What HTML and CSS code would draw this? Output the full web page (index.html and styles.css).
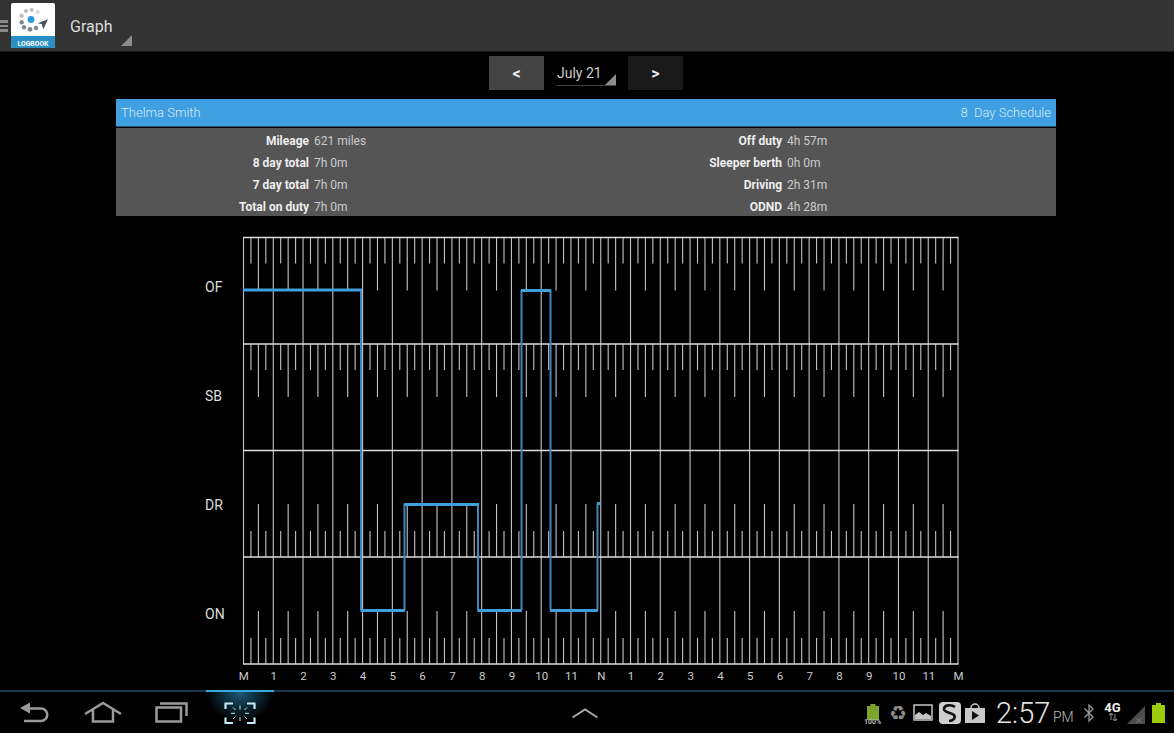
FILE: index.html
```html
<!DOCTYPE html>
<html lang="en">
<head>
<meta charset="utf-8">
<title>Graph</title>
<link rel="stylesheet" href="styles.css">
</head>
<body>
<div class="screen">
  <header class="actionbar">
    <div class="hamburger"><i></i><i></i><i></i></div>
    <svg class="logo" viewBox="0 0 44 45" width="44" height="45" aria-label="Logbook logo">
      <rect width="44" height="45" rx="2" fill="#fff"/>
      <path d="M0 33H44V43a2 2 0 0 1-2 2H2a2 2 0 0 1-2-2Z" fill="#2a8fc4"/>
      <text class="logo-text" x="22" y="43">LOGBOOK</text>
      <circle cx="20" cy="16.5" r="3.4" fill="#2b9be0"/>
      <g fill="#b9bec2">
        <circle cx="20.7" cy="7" r="2"/><circle cx="26.7" cy="9" r="2" fill="#d5d8da"/>
        <circle cx="15" cy="8" r="2"/><circle cx="10.7" cy="12.7" r="2.1"/>
      </g>
      <g fill="#7f878d">
        <circle cx="10.7" cy="19.3" r="2.2"/><circle cx="13" cy="24.3" r="2.2"/>
        <circle cx="19" cy="26.3" r="2.4"/><circle cx="25" cy="25" r="2.2"/>
      </g>
      <path d="M37 16.3 26.7 20.3 30.7 21 32.3 26.3Z" fill="#47525a"/>
    </svg>
    <div class="title-spinner">Graph</div>
  </header>

  <nav class="datenav">
    <button class="navbtn navbtn-prev">&lt;</button>
    <div class="date-spinner">July 21</div>
    <button class="navbtn navbtn-next">&gt;</button>
  </nav>

  <section class="summary">
    <div class="summary-head"><span>Thelma Smith</span><span>8&nbsp; Day Schedule</span></div>
    <div class="summary-body">
      <b>Mileage</b><span>621 miles</span><b>Off duty</b><span>4h 57m</span>
      <b>8 day total</b><span>7h 0m</span><b>Sleeper berth</b><span>0h 0m</span>
      <b>7 day total</b><span>7h 0m</span><b>Driving</b><span>2h 31m</span>
      <b>Total on duty</b><span>7h 0m</span><b>ODND</b><span>4h 28m</span>
    </div>
  </section>

  <section class="chart">
    <div class="row-labels"><span>OF</span><span>SB</span><span>DR</span><span>ON</span></div>
    <div class="chart-main">
      <svg id="grid" class="grid" viewBox="241 236 719 430" width="719" height="430">
        <g id="gridlines"></g>
        <path class="trace-v" d="M361 290V610M404.500 610V504M478 504V610M521.500 610V290M550.500 290V610M597.500 610V504"/>
        <path class="trace-h" d="M243 290H362M360.500 610.500H405M404 504.500H479M477.500 610.500H522M521 290.500H551M550 610.500H598M597 503.500H600"/>
      </svg>
      <div class="axis">
        <span>M</span><span>1</span><span>2</span><span>3</span><span>4</span><span>5</span><span>6</span><span>7</span><span>8</span><span>9</span><span>10</span><span>11</span><span>N</span>
        <span>1</span><span>2</span><span>3</span><span>4</span><span>5</span><span>6</span><span>7</span><span>8</span><span>9</span><span>10</span><span>11</span><span>M</span>
      </div>
    </div>
  </section>

  <footer class="sysbar">
    <div class="softkeys">
      <div class="softkey">
        <svg viewBox="0 0 68 41" width="68" height="41"><path class="key-fill" d="M20 16 30 10.500V21.500Z"/><path class="key-line" d="M28 16.500H41a6 6 0 0 1 0 12.500H24"/></svg>
      </div>
      <div class="softkey">
        <svg viewBox="0 0 68 41" width="68" height="41"><path class="key-line" d="M16 22 34 11 52 22M24 18V29.500H44V18"/></svg>
      </div>
      <div class="softkey">
        <svg viewBox="0 0 68 41" width="68" height="41"><path class="key-line" d="M19.500 15.500H44V29.500H19.500ZM23 11.500H49.500V24"/></svg>
      </div>
      <div class="softkey softkey-active">
        <svg viewBox="0 0 68 41" width="68" height="41"><path class="shot-line" d="M19.500 17V11.500H27M41 11.500H48.500V17M19.500 25.500V31H27M41 31H48.500V25.500"/><path class="shot-thin" d="M34 13.500V17.500M34 25V29M27 15.500 29.500 18M41 15.500 38.500 18M27 27 29.500 24.500M41 27 38.500 24.500M25 21.300H29M39 21.300H43"/></svg>
      </div>
    </div>
    <svg class="chevron" viewBox="0 0 28 12" width="28" height="12"><path d="M1.500 10.500 14 2.500 26.500 10.500"/></svg>
    <div class="status">
      <div class="batt-small">
        <svg viewBox="0 0 12 16" width="12" height="16"><path d="M3.500 0H8.500V2H12V16H0V2H3.500Z" fill="#7aa52a"/></svg>
        <span>100%</span>
      </div>
      <span class="recycle">♻</span>
      <svg class="st-img" viewBox="0 0 20 17" width="20" height="17"><rect x="1" y="1" width="18" height="15" fill="none" stroke="#c4c4c4" stroke-width="1.500"/><path d="M2 15V11L6 8 10 11 13 9 18 12V15Z" fill="#c4c4c4"/></svg>
      <svg class="st-s" viewBox="0 0 22 22" width="22" height="22"><rect width="22" height="22" rx="4" fill="#cfcfcf"/><path d="M16 5C12 2 5 3 5 7c0 4 7 3 10 6 2 3-1 6-5 6" fill="none" stroke="#111" stroke-width="2.600"/></svg>
      <svg class="st-store" viewBox="0 0 20 20" width="20" height="20"><path d="M6 5a4 4 0 0 1 8 0" fill="none" stroke="#c8c8c8" stroke-width="1.500"/><rect y="5" width="20" height="15" fill="#c8c8c8"/><path d="M7 8V17L14 12.500Z" fill="#111"/></svg>
      <span class="clock">2:57</span><span class="ampm">PM</span>
      <svg class="st-bt" viewBox="0 0 12 20" width="12" height="20"><path d="M1.500 5.500 10 14 6 18V2L10 6 1.500 14.500" fill="none" stroke="#9a9a9a" stroke-width="1.300"/></svg>
      <div class="net"><b>4G</b><svg viewBox="0 0 10 8" width="10" height="8"><path d="M3 0V7M1 2 3 0 5 2M7 8V1M5 6 7 8 9 6" fill="none" stroke="#777" stroke-width="1.200"/></svg></div>
      <svg class="st-signal" viewBox="0 0 18 18" width="18" height="18"><path d="M0 18 18 0V18Z" fill="#4d4d4d"/><path d="M9 12 15 17M15 12 9 17" stroke="#777"/></svg>
      <svg class="st-batt" viewBox="0 0 13 20" width="13" height="20"><path d="M4 0H9V2H13V20H0V2H4Z" fill="#9ccb0b"/></svg>
    </div>
  </footer>
</div>
<script src="graph.js"></script>
</body>
</html>
```
FILE: styles.css
```css
* { box-sizing: border-box; }
html, body { margin: 0; background: #000; }
.screen {
  width: 1174px; height: 733px; overflow: hidden;
  display: flex; flex-direction: column;
  background: #000; color: #ddd;
  font-family: Roboto, "Liberation Sans", sans-serif;
}

/* action bar */
.actionbar {
  height: 52px; flex: none; background: #333;
  border-bottom: 1px solid #1d1d1d;
  display: flex; align-items: flex-start;
}
.hamburger { width: 8px; margin-top: 20px; display: flex; flex-direction: column; gap: 2px; }
.hamburger i { display: block; height: 2.500px; background: #8a8a8a; }
.logo { margin: 3px 0 0 3px; flex: none; }
.logo-text { font: 700 6.800px Roboto, sans-serif; fill: #fff; text-anchor: middle; }
.title-spinner {
  position: relative; width: 62px; height: 46px; margin-left: 15px;
  padding-top: 17px; font-size: 16px; line-height: 20px; color: #ddd;
}
.title-spinner::after, .date-spinner::after {
  content: ""; position: absolute; right: 0; bottom: 0; width: 11px; height: 11px;
  background: #8c8c8c; clip-path: polygon(100% 0, 100% 100%, 0 100%);
}

/* date nav */
.datenav { display: flex; justify-content: center; margin: 4px 2px 9px 0; height: 34px; flex: none; }
.navbtn {
  width: 55px; border: 0; padding: 0; color: #eee;
  font: 700 16px Roboto, sans-serif;
}
.navbtn-prev { background: #444; }
.navbtn-next { background: #1a1a1a; }
.date-spinner {
  position: relative; width: 59px; height: 30px; margin: 0 12px 0 13px;
  font-size: 14px; line-height: 34px; color: #ccc; white-space: nowrap;
  border-bottom: 1px solid #444;
}

/* summary */
.summary { width: 940px; margin-left: 116px; flex: none; }
.summary-head {
  height: 28px; background: #3f9fe0; color: #d4ebf9;
  display: flex; justify-content: space-between; align-items: center;
  padding: 0 5px; font-size: 13px; font-weight: 300;
  border-bottom: 1px solid #24506e;
}
.summary-body {
  height: 88px; margin-top: 1px; padding-top: 2px; background: #555; overflow: hidden;
  display: grid; grid-template-columns: 193px 277px 196px 1fr; grid-auto-rows: 22px;
  align-items: center; font-size: 12px;
}
.summary-body b { text-align: right; color: #eee; font-weight: 700; }
.summary-body span { padding-left: 5px; color: #ccc; }

/* chart */
.chart { display: flex; padding: 20px 0 0 205px; flex: none; }
.row-labels {
  width: 36px; height: 436px; margin-top: -4px;
  display: grid; grid-auto-rows: 109px; align-items: center;
  font-size: 14px; color: #ddd;
}
.chart-main { display: flex; flex-direction: column; }
.grid { display: block; }
.grid line { stroke: #c4c4c4; stroke-width: 1.100; }
.grid line.h { stroke: #dedede; stroke-width: 1.300; }
.trace-v { fill: none; stroke: #3e86bb; stroke-width: 2; }
.trace-h { fill: none; stroke: #3f9fdd; stroke-width: 3; }
.axis {
  display: grid; grid-template-columns: repeat(25, 29.790px);
  margin: 3px 0 0 -12px; font-size: 11.500px; line-height: 14px; color: #ccc; text-align: center;
}

/* system bar */
.sysbar {
  height: 43px; margin-top: auto; flex: none;
  border-top: 2px solid #173747;
  display: grid; grid-template-columns: 1fr auto 1fr; align-items: center;
}
.softkeys { display: flex; height: 41px; }
.softkey { position: relative; width: 68.500px; }
.softkey svg { display: block; }
.softkey-active {
  background: radial-gradient(ellipse 34px 30px at 50% 0, #1d5c78 0, #0d2c3a 50%, #000 100%);
}
.softkey-active::before {
  content: ""; position: absolute; left: 0; right: 0; top: -2px; height: 2px; background: #3aa7dc;
}
.key-line { fill: none; stroke: #9a9a9a; stroke-width: 2.500; }
.key-fill { fill: #9a9a9a; }
.shot-line { fill: none; stroke: #c4e8f7; stroke-width: 2.200; }
.shot-thin { fill: none; stroke: #c4e8f7; stroke-width: 1; }
.chevron { margin: 0 4px 0 0; }
.chevron path { fill: none; stroke: #a8a8a8; stroke-width: 2; }
.status { display: flex; align-items: center; justify-content: flex-end; padding-right: 9px; }
.status > * { flex: none; }
.batt-small { position: relative; width: 21px; height: 22px; display: flex; justify-content: center; margin-top: 4px; }
.batt-small span {
  position: absolute; left: 0; right: 0; bottom: 0; text-align: center;
  font-size: 7px; line-height: 8px; font-weight: 700; color: #bbb;
}
.recycle {
  width: 18px; margin-left: 6px; font: 20px/22px "DejaVu Sans", sans-serif; color: #8d8d8d; text-align: center;
}
.st-img { margin-left: 6px; }
.st-s { margin-left: 6px; }
.st-store { margin-left: 4px; }
.clock { width: 53px; margin-left: 11px; font-size: 29px; font-weight: 300; color: #e4e4e4; line-height: 40px; }
.ampm { width: 20px; margin: 8px 0 0 4px; font-size: 14px; font-weight: 300; color: #bbb; }
.st-bt { margin-left: 10px; }
.net { width: 25px; margin-left: 5px; display: flex; flex-direction: column; align-items: center; margin-top: -3px; }
.net b { font-size: 13px; line-height: 11px; color: #eee; }
.st-signal { margin-left: 2px; margin-top: 4px; }
.st-batt { margin-left: 7px; }
```
FILE: graph.js
```js
// Draws the log grid: hour lines plus quarter and half hour ticks per duty row.
(function () {
  var NS = 'http://www.w3.org/2000/svg';
  var g = document.getElementById('gridlines');
  var X0 = 243.5, X1 = 958, ROWS = [237.5, 344, 450.5, 557, 664];
  var STEP = (X1 - X0) / 96;

  function line(x1, y1, x2, y2, cls) {
    var l = document.createElementNS(NS, 'line');
    l.setAttribute('x1', x1); l.setAttribute('y1', y1);
    l.setAttribute('x2', x2); l.setAttribute('y2', y2);
    if (cls) l.setAttribute('class', cls);
    g.appendChild(l);
  }

  var i;
  for (i = 0; i <= 96; i++) {
    var x = X0 + i * STEP;
    if (i % 4 === 0) {
      line(x, ROWS[0], x, ROWS[4]);
    } else {
      var len = i % 4 === 2 ? 53 : 26;
      line(x, ROWS[0], x, ROWS[0] + len);
      line(x, ROWS[1], x, ROWS[1] + len);
      line(x, ROWS[3], x, ROWS[3] - len);
      line(x, ROWS[4], x, ROWS[4] - len);
    }
  }
  ROWS.forEach(function (y) { line(X0 - 0.5, y, X1 + 0.5, y, 'h'); });
})();
```
